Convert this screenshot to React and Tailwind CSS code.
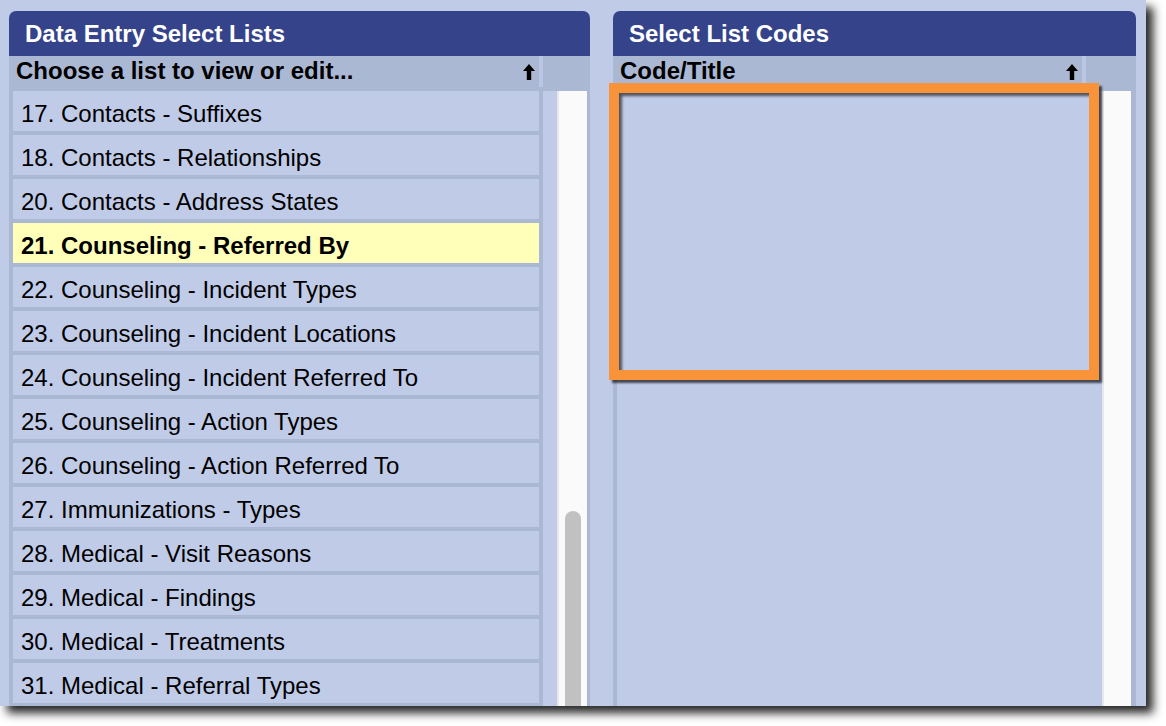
import React from "react";

const items = [
  "17. Contacts - Suffixes",
  "18. Contacts - Relationships",
  "20. Contacts - Address States",
  "21. Counseling - Referred By",
  "22. Counseling - Incident Types",
  "23. Counseling - Incident Locations",
  "24. Counseling - Incident Referred To",
  "25. Counseling - Action Types",
  "26. Counseling - Action Referred To",
  "27. Immunizations - Types",
  "28. Medical - Visit Reasons",
  "29. Medical - Findings",
  "30. Medical - Treatments",
  "31. Medical - Referral Types",
];

function UpArrow() {
  return (
    <svg width="12" height="16" viewBox="0 0 12 16" className="shrink-0">
      <path d="M6 0 L12 7 L8.2 7 L8.2 16 L3.8 16 L3.8 7 L0 7 Z" fill="#000" />
    </svg>
  );
}

export default function App() {
  return (
    <div
      className="w-[1166px] h-[726px] bg-white"
      style={{ fontFamily: '"Liberation Sans", Arial, Helvetica, sans-serif' }}
    >
      <div className="relative w-[1146px] h-[706px] overflow-hidden bg-[#c0cbe8] shadow-[7px_7px_9px_rgba(0,0,0,0.85)] flex gap-[23px] pt-[11px] pl-[9px]">
        {/* Left panel */}
        <div className="w-[581px] flex flex-col">
          <div className="h-[45px] shrink-0 rounded-t-[7px] bg-[#35438b] text-white font-bold text-[24px] pl-4 flex items-center">
            Data Entry Select Lists
          </div>
          <div className="h-[31px] shrink-0 flex">
            <div className="w-[530px] bg-[#abb8d3] flex items-center justify-between pl-[7px] pr-[4px] font-bold text-[24px] text-black">
              <span className="-mt-[1px]">Choose a list to view or edit...</span>
              <UpArrow />
            </div>
            <div className="w-[4px] bg-[#bac6e3]" />
            <div className="flex-1 bg-[#abb8d3]" />
          </div>
          <div className="h-[4px] shrink-0 bg-[#abb8d3]" />
          <div className="flex-1 min-h-0 flex">
            <div className="w-[534px] bg-[#abb8d3] px-1 flex flex-col gap-1 overflow-hidden">
              {items.map((t, i) => (
                <div
                  key={t}
                  className={
                    i === 3
                      ? "h-[40px] shrink-0 bg-[#ffffb9] font-bold text-[24px] text-black pl-2 pt-[5px] flex items-center"
                      : "h-[40px] shrink-0 bg-[#c0cbe8] text-[24px] text-black pl-2 pt-[5px] flex items-center"
                  }
                >
                  {t}
                </div>
              ))}
            </div>
            <div className="w-[14px] bg-[#c0cbe8]" />
            <div className="w-[30px] relative bg-[#fafafa] border-l-2 border-[#e8e8ec]">
              <div className="absolute left-[6px] top-[420px] w-[16px] h-[300px] rounded-t-full bg-[#c1c1c1]" />
            </div>
            <div className="w-[3px] bg-[#abb8d3]" />
          </div>
        </div>

        {/* Right panel */}
        <div className="w-[523px] flex flex-col">
          <div className="h-[45px] shrink-0 rounded-t-[7px] bg-[#35438b] text-white font-bold text-[24px] pl-4 flex items-center">
            Select List Codes
          </div>
          <div className="h-[31px] shrink-0 flex">
            <div className="w-[469px] bg-[#abb8d3] flex items-center justify-between pl-[7px] pr-[4px] font-bold text-[24px] text-black">
              <span className="-mt-[1px]">Code/Title</span>
              <UpArrow />
            </div>
            <div className="w-[4px] bg-[#bac6e3]" />
            <div className="flex-1 bg-[#abb8d3]" />
          </div>
          <div className="h-[4px] shrink-0 bg-[#abb8d3]" />
          <div className="flex-1 min-h-0 flex">
            <div className="w-[4px] bg-[#abb8d3]" />
            <div className="w-[485px] bg-[#c0cbe8]" />
            <div className="w-[29px] bg-[#fafafa] border-l-2 border-[#e8e8ec]" />
            <div className="w-[5px] bg-[#abb8d3]" />
          </div>
        </div>

        {/* Orange annotation box */}
        <div className="absolute left-[609px] top-[83px] w-[490px] h-[297px] border-[10px] border-[#f8933a] shadow-[3px_3px_2px_rgba(0,0,0,0.65),inset_3px_3px_3px_rgba(0,0,0,0.6)]" />
      </div>
    </div>
  );
}
